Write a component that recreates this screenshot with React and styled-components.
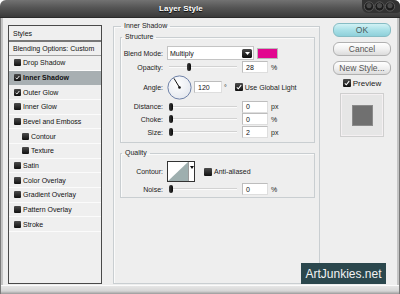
import React from 'react';
import styled, { createGlobalStyle } from 'styled-components';

const Global = createGlobalStyle`
  html, body { margin: 0; padding: 0; background: #ffffff; }
  body { width: 400px; height: 294px; overflow: hidden; font-family: "Liberation Sans", Arial, sans-serif; }
  * { box-sizing: border-box; }
`;

const Window = styled.div`
  position: relative;
  width: 400px;
  height: 294px;
  display: flex;
  flex-direction: column;
  background: #eeeeee;
  border-radius: 6px 6px 0 0;
  overflow: hidden;
`;

const TitleBar = styled.div`
  height: 18px;
  flex: none;
  display: flex;
  align-items: center;
  background: linear-gradient(#727272 0%, #555555 45%, #3a3a3a 100%);
  border-bottom: 1px solid #2a2a2a;
`;

const Title = styled.div`
  flex: 1;
  text-align: center;
  color: #ffffff;
  font-weight: bold;
  font-size: 8px;
  letter-spacing: 0.1px;
  text-shadow: 0 1px 1px #000;
`;

const Controls = styled.div`
  width: 38px;
  height: 18px;
  display: flex;
  align-items: flex-start;
`;

const Body = styled.div`
  flex: 1;
  display: flex;
  padding: 3px 9px 0 8px;
  background: #eeeeee;
  box-shadow: inset 1px 0 0 #7a7a7a, inset 3px 0 0 #c4c4c4, inset -1px 0 0 #7a7a7a, inset -3px 0 0 #c4c4c4;
`;

const BottomFrame = styled.div`
  height: 9px;
  flex: none;
  background: linear-gradient(#fbfbfb 0, #fbfbfb 1px, #e6e6e6 1px, #d6d6d6 6px, #9a9a9a 100%);
  box-shadow: inset 1px 0 0 #7a7a7a, inset -1px 0 0 #7a7a7a;
`;

/* ---------- left style list ---------- */
const StyleList = styled.div`
  width: 94px;
  height: 259px;
  margin-top: 4px;
  flex: none;
  border: 1px solid #4a4a4a;
  background: #efefef;
  display: flex;
  flex-direction: column;
`;

const ListHeader = styled.div`
  height: ${p => p.$h}px;
  flex: none;
  display: flex;
  align-items: center;
  padding-left: 4px;
  font-size: 7px;
  color: #111;
  border-bottom: ${p => p.$line};
`;

const ListItem = styled.div`
  height: 14.67px;
  flex: none;
  display: flex;
  align-items: center;
  gap: 2px;
  padding-left: ${p => (p.$sub ? 13 : 5)}px;
  font-size: 7px;
  color: #111;
  font-weight: ${p => (p.$active ? 'bold' : 'normal')};
  background: ${p => (p.$active ? '#a8afb2' : 'transparent')};
  border-bottom: 1px solid ${p => (p.$active ? '#a8afb2' : '#fbfbfb')};
`;

/* ---------- checkbox ---------- */
const Box = styled.span`
  flex: none;
  display: inline-flex;
  align-items: center;
  justify-content: center;
  width: ${p => p.$size}px;
  height: ${p => p.$size}px;
  border-radius: 1px;
  background: linear-gradient(#4c4c4c, #101010);
`;

function CheckBox({ size = 7, checked }) {
  return (
    <Box $size={size}>
      {checked && (
        <svg width={size - 2} height={size - 2} viewBox="0 0 6 6">
          <path d="M0.8 3.4 L2.3 4.8 L5.2 1.2" stroke="#ffffff" strokeWidth="1.1" fill="none" />
        </svg>
      )}
    </Box>
  );
}

/* ---------- main settings ---------- */
const Main = styled.fieldset`
  width: 207px;
  height: 263px;
  margin: 0 0 0 11px;
  padding: 0 4px 0 6px;
  border: 1px solid #c9ced1;
  box-shadow: inset 1px 1px 0 #fafafa;
  flex: none;
`;

const Legend = styled.legend`
  margin-left: 1px;
  padding: 0 3px;
  font-size: 7px;
  line-height: 10px;
  color: #222;
`;

const Group = styled.fieldset`
  margin: ${p => p.$mt}px 0 0 0;
  padding: ${p => p.$pt}px 0 ${p => p.$pb}px 0;
  border: 1px solid #c9ced1;
  box-shadow: inset 1px 1px 0 #fafafa;
  display: flex;
  flex-direction: column;
  gap: 1px;
`;

const Row = styled.div`
  height: ${p => p.$h}px;
  display: flex;
  align-items: center;
  font-size: 7px;
  color: #222;
`;

const Label = styled.span`
  width: 42px;
  flex: none;
  text-align: right;
  margin-right: 4px;
`;

const Select = styled.div`
  width: 87px;
  height: 14px;
  display: flex;
  align-items: center;
  justify-content: space-between;
  padding: 0 1px 0 2px;
  background: #ffffff;
  border: 1px solid #c4c4c4;
  font-size: 7px;
  color: #111;
`;

const SelectButton = styled.span`
  width: 10px;
  height: 9px;
  border-radius: 1.5px;
  background: linear-gradient(#4a4a4a, #0c0c0c);
  display: flex;
  align-items: center;
  justify-content: center;
`;

const Swatch = styled.span`
  width: 21px;
  height: 11px;
  margin-left: 3px;
  background: #e2078f;
  border: 1px solid #b8b8b8;
`;

const SliderWrap = styled.div`
  position: relative;
  width: 68px;
  height: 10px;
  margin-left: 2px;
  flex: none;
`;

const Track = styled.div`
  position: absolute;
  left: 0;
  right: 0;
  top: 4px;
  height: 2px;
  border-top: 1px solid #d2d2d2;
  border-bottom: 1px solid #fbfbfb;
`;

const Thumb = styled.div`
  position: absolute;
  top: 1px;
  width: 4px;
  height: 8px;
  border-radius: 2px;
  background: linear-gradient(90deg, #3a3a3a, #0a0a0a);
`;

const Field = styled.div`
  width: ${p => p.$w}px;
  height: 12px;
  margin-left: ${p => p.$ml}px;
  flex: none;
  display: flex;
  align-items: center;
  padding-left: 3px;
  background: #ffffff;
  border: 1px solid #bdbdbd;
  border-bottom-color: #dedede;
  border-right-color: #dedede;
  font-size: 7px;
  color: #111;
`;

const Unit = styled.span`
  margin-left: ${p => p.$ml}px;
  font-size: 7px;
  color: #222;
`;

const Inline = styled.span`
  display: inline-flex;
  align-items: center;
  margin-left: ${p => p.$ml}px;
  gap: ${p => p.$gap}px;
`;

const ContourBox = styled.div`
  width: 28px;
  height: 21px;
  display: flex;
  border: 1px solid #333333;
  background: #ffffff;
  flex: none;
`;

const ContourArrow = styled.div`
  width: 6px;
  border-left: 1px solid #9a9a9a;
  display: flex;
  justify-content: center;
  padding-top: 4px;
`;

/* ---------- right column ---------- */
const Side = styled.div`
  width: 58px;
  margin-left: 13px;
  padding-top: 2px;
  display: flex;
  flex-direction: column;
  align-items: center;
  flex: none;
`;

const Button = styled.div`
  width: 58px;
  height: 14px;
  margin-bottom: 5px;
  display: flex;
  align-items: center;
  justify-content: center;
  border-radius: 6px;
  font-size: 8.5px;
  color: ${p => (p.$primary ? '#4a5a5c' : '#555555')};
  border: 1px solid ${p => (p.$primary ? '#86bcc4' : '#b0b0b0')};
  background: ${p =>
    p.$primary
      ? 'linear-gradient(#d2f2f5 0%, #a9e0e7 50%, #8fd0da 100%)'
      : 'linear-gradient(#ffffff 0%, #f1f1f1 50%, #dcdcdc 100%)'};
`;

const PreviewToggle = styled.div`
  display: flex;
  align-items: center;
  gap: 2px;
  height: 8px;
  margin-top: -1px;
  font-size: 8px;
  color: #222;
`;

const PreviewBox = styled.div`
  width: 44px;
  height: 44px;
  margin-top: 6px;
  display: flex;
  align-items: center;
  justify-content: center;
  background: #e6e6e6;
  border: 1px solid #cfcfcf;
  box-shadow: inset 0 0 0 1px #f4f0f2;
`;

const PreviewSwatch = styled.div`
  width: 21px;
  height: 21px;
  background: #707070;
  border: 1px solid #8a8a8a;
`;

const Watermark = styled.div`
  position: absolute;
  left: 301px;
  top: 263px;
  width: 85px;
  height: 21px;
  display: flex;
  align-items: center;
  justify-content: center;
  background: #2b474d;
  color: #f2f2f2;
  font-size: 12px;
`;

const listItems = [
  { label: 'Drop Shadow' },
  { label: 'Inner Shadow', checked: true, active: true },
  { label: 'Outer Glow', checked: true },
  { label: 'Inner Glow' },
  { label: 'Bevel and Emboss' },
  { label: 'Contour', sub: true },
  { label: 'Texture', sub: true },
  { label: 'Satin' },
  { label: 'Color Overlay' },
  { label: 'Gradient Overlay' },
  { label: 'Pattern Overlay' },
  { label: 'Stroke' },
];

function Slider({ value }) {
  return (
    <SliderWrap>
      <Track />
      <Thumb style={{ left: `${Math.round((value / 100) * 64)}px` }} />
    </SliderWrap>
  );
}

function SliderRow({ label, value, pos, unit, h }) {
  return (
    <Row $h={h}>
      <Label>{label}</Label>
      <Slider value={pos} />
      <Field $w={26} $ml={5}>{value}</Field>
      <Unit $ml={3}>{unit}</Unit>
    </Row>
  );
}

function WindowButtons() {
  return (
    <svg width="38" height="14" viewBox="0 0 38 14">
      <rect x="0" y="-6" width="40" height="19" rx="6" fill="#333333" />
      {[7, 17.5, 28].map(cx => (
        <g key={cx}>
          <circle cx={cx} cy="6.5" r="4.6" fill="#1c1c1c" stroke="#6a6a6a" strokeWidth="0.8" />
          <circle cx={cx} cy="5.6" r="2.6" fill="#4a4a4a" />
        </g>
      ))}
    </svg>
  );
}

function AngleDial() {
  return (
    <svg width="25" height="25" viewBox="0 0 25 25" style={{ flex: 'none' }}>
      <defs>
        <radialGradient id="dialg" cx="40%" cy="35%" r="70%">
          <stop offset="0%" stopColor="#ffffff" />
          <stop offset="100%" stopColor="#e3e7ee" />
        </radialGradient>
      </defs>
      <circle cx="12.5" cy="12.5" r="11.6" fill="url(#dialg)" stroke="#6f82a8" strokeWidth="1" />
      <line x1="12.5" y1="12.5" x2="7" y2="3.4" stroke="#111" strokeWidth="1" />
      <circle cx="12.5" cy="12.5" r="1.3" fill="#111" />
    </svg>
  );
}

export default function App() {
  return (
    <>
      <Global />
      <Window>
        <TitleBar>
          <Title>Layer Style</Title>
          <Controls>
            <WindowButtons />
          </Controls>
        </TitleBar>
        <Body>
          <StyleList>
            <ListHeader $h={16} $line="2px solid #777777">Styles</ListHeader>
            <ListHeader $h={14} $line="1px solid #a2a2a2">Blending Options: Custom</ListHeader>
            {listItems.map(it => (
              <ListItem key={it.label} $sub={it.sub} $active={it.active}>
                <CheckBox size={7} checked={it.checked} />
                <span>{it.label}</span>
              </ListItem>
            ))}
          </StyleList>

          <Main>
            <Legend>Inner Shadow</Legend>
            <Group $mt={1} $pt={4} $pb={4}>
              <Legend>Structure</Legend>
              <Row $h={14}>
                <Label>Blend Mode:</Label>
                <Select>
                  <span>Multiply</span>
                  <SelectButton>
                    <svg width="5" height="3" viewBox="0 0 5 3">
                      <path d="M0 0 H5 L2.5 3 Z" fill="#ffffff" />
                    </svg>
                  </SelectButton>
                </Select>
                <Swatch />
              </Row>
              <SliderRow h={12} label="Opacity:" value="28" pos={28} unit="%" />
              <Row $h={26}>
                <Label>Angle:</Label>
                <AngleDial />
                <Field $w={28} $ml={2}>120</Field>
                <Unit $ml={2}>°</Unit>
                <Inline $ml={8} $gap={2}>
                  <CheckBox size={8} checked />
                  <span>Use Global Light</span>
                </Inline>
              </Row>
              <SliderRow h={11} label="Distance:" value="0" pos={0} unit="px" />
              <SliderRow h={12} label="Choke:" value="0" pos={0} unit="%" />
              <SliderRow h={12} label="Size:" value="2" pos={0} unit="px" />
            </Group>
            <Group $mt={5} $pt={3} $pb={2}>
              <Legend>Quality</Legend>
              <Row $h={21}>
                <Label>Contour:</Label>
                <ContourBox>
                  <svg width="20" height="19" viewBox="0 0 20 19">
                    <polygon points="0,19 20,0 20,19" fill="#9eafaf" />
                  </svg>
                  <ContourArrow>
                    <svg width="4" height="3" viewBox="0 0 4 3">
                      <path d="M0 0 H4 L2 3 Z" fill="#111" />
                    </svg>
                  </ContourArrow>
                </ContourBox>
                <Inline $ml={9} $gap={2}>
                  <CheckBox size={8} />
                  <span>Anti-aliased</span>
                </Inline>
              </Row>
              <SliderRow h={12} label="Noise:" value="0" pos={0} unit="%" />
            </Group>
          </Main>

          <Side>
            <Button $primary>OK</Button>
            <Button>Cancel</Button>
            <Button>New Style...</Button>
            <PreviewToggle>
              <CheckBox size={8} checked />
              <span>Preview</span>
            </PreviewToggle>
            <PreviewBox>
              <PreviewSwatch />
            </PreviewBox>
          </Side>
        </Body>
        <BottomFrame />
        <Watermark>ArtJunkies.net</Watermark>
      </Window>
    </>
  );
}
